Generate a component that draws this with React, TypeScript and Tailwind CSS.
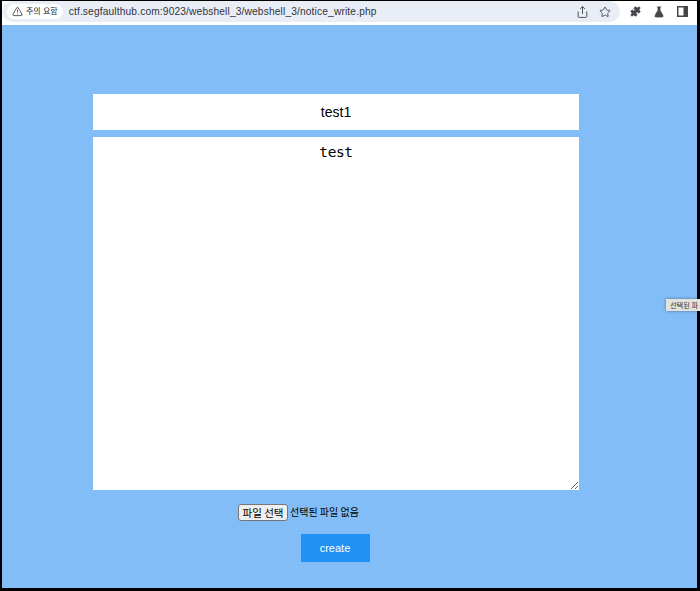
import React from 'react';
import { Share, Star, Puzzle, FlaskConical, TriangleAlert } from 'lucide-react';

const App: React.FC = () => {
  return (
    <div className="relative w-[700px] h-[591px] overflow-hidden bg-black pl-[2px] pr-[3px] pt-[1px] pb-[3px] font-['Liberation_Sans','Noto_Sans_CJK_KR',sans-serif]">
      <div className="flex flex-col h-full bg-[#83bdf7]">
        <div className="flex items-start h-[24px] shrink-0 bg-white">
          <div className="flex items-center flex-1 h-[21px] bg-[#e9edf6] rounded-r-[11px] rounded-l-[11px] pl-[5px]">
            <div className="flex items-center gap-[3px] h-[15px] pl-[5px] pr-[5px] bg-white rounded-full text-[8px] text-[#202124]">
              <TriangleAlert className="w-[11px] h-[11px]" strokeWidth={1.6} />
              <span>주의 요함</span>
            </div>
            <span className="ml-[6px] text-[10.2px] text-[#30343a] tracking-[0.15px]">ctf.segfaulthub.com:9023/webshell_3/webshell_3/notice_write.php</span>
            <div className="flex items-center gap-[10px] ml-auto mr-[9px] text-[#44474b]">
              <Share className="w-[13px] h-[14px]" strokeWidth={1.7} />
              <Star className="w-[12px] h-[12px]" strokeWidth={1.8} />
            </div>
          </div>
          <div className="flex items-center gap-[12px] h-[21px] pl-[10px] pr-[9px] text-[#44474b]">
            <Puzzle className="w-[11px] h-[11px]" fill="#44474b" strokeWidth={1.5} />
            <FlaskConical className="w-[12px] h-[12px]" fill="#44474b" strokeWidth={1.5} />
            <svg className="w-[11px] h-[11px]" viewBox="0 0 11 11">
              <rect x="0.75" y="0.75" width="9.5" height="9.5" fill="none" stroke="#44474b" strokeWidth="1.5" />
              <rect x="6.5" y="1" width="4" height="9" fill="#44474b" />
            </svg>
          </div>
        </div>

        <div className="flex flex-col items-center pt-[69px] pr-[27px]">
          <input
            readOnly
            value="test1"
            className="block w-[486px] h-[36px] bg-white text-center text-[14px] text-black outline-none font-['Liberation_Sans',sans-serif]"
          />
          <textarea
            readOnly
            value="test"
            className="block w-[486px] h-[353px] mt-[7px] bg-white text-center text-[14.5px] leading-[17px] pt-[7px] text-black outline-none font-['DejaVu_Sans_Mono','Liberation_Mono',monospace] tracking-[-0.4px]"
          />
          <div className="flex items-center gap-[2px] w-[486px] mt-[13px] pl-[145px] h-[19px] text-[10px] text-black font-['Noto_Sans_CJK_KR',sans-serif]">
            <button className="flex items-center justify-center w-[50px] h-[17px] bg-[#efefef] border border-[#767676] rounded-[3px] text-[10.5px]">파일 선택</button>
            <span className="-translate-y-px">선택된 파일 없음</span>
          </div>
          <button className="w-[69px] h-[28px] mt-[12px] mr-[2px] bg-[#2191f3] text-white text-[11px]">create</button>
        </div>
      </div>

      <div className="absolute left-[666px] top-[299px] flex items-center w-[34px] h-[12px] pl-[4px] whitespace-nowrap bg-[#e3e3dd] text-[7.2px] text-[#333333] shadow-[0_0_3px_rgba(0,0,0,0.4)] font-['Noto_Sans_CJK_KR',sans-serif]">
        선택된 파
      </div>
    </div>
  );
};

export default App;
